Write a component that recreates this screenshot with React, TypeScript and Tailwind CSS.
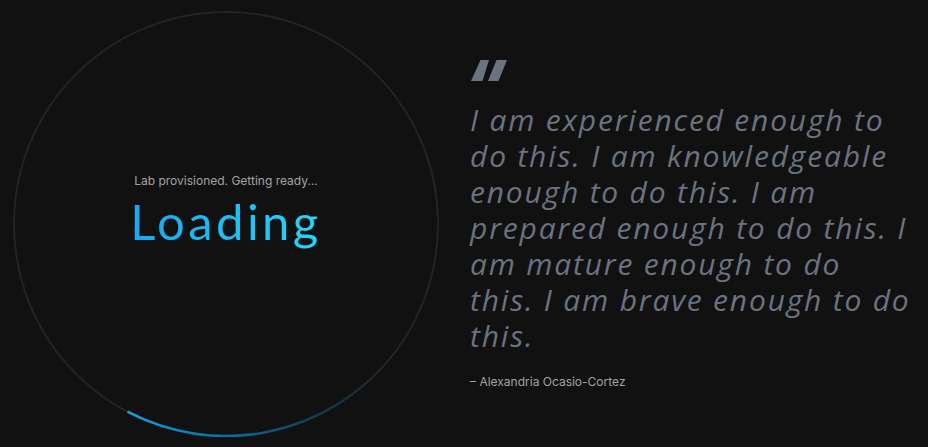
const QUOTE_LINES = [
  "I am experienced enough to",
  "do this. I am knowledgeable",
  "enough to do this. I am",
  "prepared enough to do this. I",
  "am mature enough to do",
  "this. I am brave enough to do",
  "this.",
];

function ProgressRing() {
  return (
    <svg className="absolute inset-0" width="426" height="426" viewBox="0 0 426 426">
      <defs>
        <linearGradient id="arcFade" gradientUnits="userSpaceOnUse" x1="114" y1="0" x2="378" y2="0">
          <stop offset="0" stopColor="#0ea5e9" stopOpacity="1" />
          <stop offset="0.4" stopColor="#0284c7" stopOpacity="0.75" />
          <stop offset="1" stopColor="#075985" stopOpacity="0" />
        </linearGradient>
      </defs>
      <circle cx="213" cy="213" r="212" fill="none" stroke="#242424" strokeWidth="2" />
      <path
        d="M 114.5 400.7 A 212 212 0 0 0 375.4 349.3"
        fill="none"
        stroke="url(#arcFade)"
        strokeWidth="2.5"
      />
    </svg>
  );
}

function QuoteMark() {
  return (
    <svg width="40" height="23" viewBox="0 0 40 23" className="text-[#6b7280]">
      <polygon points="10.5,1 19,1 12.5,22 1,22" fill="currentColor" />
      <polygon points="26.5,1 37,1 28.5,22 18,22" fill="currentColor" />
    </svg>
  );
}

export default function App() {
  return (
    <div className="flex h-[447px] w-full items-center gap-[31px] bg-[#111111] pl-[13px]">
      {/* Ring */}
      <div className="relative h-[426px] w-[426px] flex-shrink-0">
        <ProgressRing />
        <div className="relative flex h-full flex-col items-center justify-center pb-[24px]">
          <p className="font-['Inter',sans-serif] text-[12px] leading-4 text-[#a3a3a3]">
            Lab provisioned. Getting ready...
          </p>
          <h1 className="mt-[2px] bg-gradient-to-r from-[#1aa5ef] to-[#22d8f7] bg-clip-text font-['Lato',sans-serif] text-[49px] font-normal leading-[60px] tracking-[3.4px] text-transparent">
            Loading
          </h1>
        </div>
      </div>

      {/* Quote */}
      <div className="flex flex-col pt-[2px]">
        <QuoteMark />
        <blockquote className="mt-[20px] font-['Open_Sans',sans-serif] text-[30px] font-normal italic leading-9 tracking-[1.8px] text-[#6b7280]">
          {QUOTE_LINES.map((line) => (
            <span key={line} className="block whitespace-nowrap">
              {line}
            </span>
          ))}
        </blockquote>
        <p className="mt-5 font-['Inter',sans-serif] text-[12px] leading-4 text-[#a3a3a3]">
          – Alexandria Ocasio-Cortez
        </p>
      </div>
    </div>
  );
}
